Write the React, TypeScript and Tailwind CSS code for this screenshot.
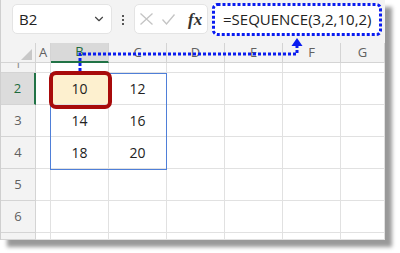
import { ChevronDown } from "lucide-react";

const colLetters = ["A", "B", "C", "D", "E", "F", "G"];

const data: Record<string, string> = {
    "2B": "10",
    "2C": "12",
    "3B": "14",
    "3C": "16",
    "4B": "18",
    "4C": "20",
};

const rows = [1, 2, 3, 4, 5, 6, 7];

function Toolbar() {
    return (
        <div className="flex h-[43px] items-start bg-[#f3f3f3] pl-[11px] pt-[4px]">
            {/* Name box */}
            <div className="flex h-[30px] w-[100px] items-center justify-between rounded-[5px] border border-[#e4e4e4] bg-white pl-[6px] pr-[5px]">
                <span className="text-[15px] text-[#222]">B2</span>
                <ChevronDown className="h-[14px] w-[14px] text-[#444]" strokeWidth={2} />
            </div>

            {/* Splitter dots */}
            <div className="ml-[10px] mt-[11px] flex flex-col gap-[2px]">
                <span className="h-[2px] w-[2px] bg-[#555]" />
                <span className="h-[2px] w-[2px] bg-[#555]" />
                <span className="h-[2px] w-[2px] bg-[#555]" />
            </div>

            {/* Cancel / enter / fx */}
            <div className="ml-[10px] flex h-[30px] w-[74px] items-center rounded-[5px] border border-[#e4e4e4] bg-white pl-[5px]">
                <svg width="13" height="12" viewBox="0 0 13 12" fill="none" stroke="#c4c4c4" strokeWidth="1.3">
                    <path d="M0.5 0.5 L12.5 11.5 M12.5 0.5 L0.5 11.5" />
                </svg>
                <svg className="ml-[9px]" width="13" height="11" viewBox="0 0 13 11" fill="none" stroke="#c4c4c4" strokeWidth="1.3">
                    <path d="M0.5 5.5 L4.5 10 L12.5 0.5" />
                </svg>
                <span className="ml-[13px] font-['Liberation_Serif',serif] text-[17px] font-bold italic leading-none text-[#333]">
                    fx
                </span>
            </div>

            {/* Formula input */}
            <div className="ml-[4px] flex h-[31px] w-[168px] items-center bg-white pl-[11px]">
                <span className="text-[15px] text-[#222]">=SEQUENCE(3,2,10,2)</span>
            </div>
        </div>
    );
}

function Grid() {
    return (
        <div className="grid h-[197px] grid-cols-[35px_15px_58px_58px_58px_58px_58px_1fr] grid-rows-[20px_10px_32px_32px_32px_32px_32px_1fr] overflow-hidden">
            {/* corner */}
            <div className="relative border-b border-r border-[#d4d4d4] bg-[#f3f3f3]">
                <div
                    className="absolute bottom-[2px] right-[3px] h-0 w-0"
                    style={{ borderBottom: "11px solid #c8c8c8", borderLeft: "11px solid transparent" }}
                />
            </div>
            {colLetters.map((c) =>
                c === "B" ? (
                    <div key={c} className="flex items-center justify-center border-b-2 border-r border-b-[#217346] border-r-[#d4d4d4] bg-[#d9d9d9] text-[13px] text-[#1e6b3c]">
                        {c}
                    </div>
                ) : (
                    <div key={c} className="flex items-center justify-center border-b border-r border-[#d4d4d4] bg-[#f3f3f3] text-[13px] text-[#616161]">
                        {c}
                    </div>
                )
            )}

            {rows.map((r) => (
                <RowCells key={r} r={r} />
            ))}
        </div>
    );
}

function RowCells({ r }: { r: number }) {
    const active = r === 2;
    let label: React.ReactNode = r;
    if (r === 1) label = <span className="-mt-[6px]">1</span>;
    if (r === 7) label = null;
    return (
        <>
            <div
                className={
                    active
                        ? "flex items-end justify-center overflow-hidden border-b border-r-2 border-b-[#d4d4d4] border-r-[#217346] bg-[#dcdcdc] pb-[6px] text-[13px] text-[#1e6b3c]"
                        : r === 1
                        ? "flex items-start justify-center overflow-hidden border-b border-r border-[#d4d4d4] bg-[#f3f3f3] text-[13px] leading-none text-[#8a8a8a]"
                        : "flex items-end justify-center overflow-hidden border-b border-r border-[#d4d4d4] bg-[#f3f3f3] pb-[6px] text-[13px] text-[#616161]"
                }
            >
                {label}
            </div>
            {colLetters.map((c) => {
                const v = data[`${r}${c}`];
                return (
                    <div
                        key={c}
                        className={
                            r === 2 && c === "B"
                                ? "flex items-center justify-center border-b border-r border-[#e1e1e1] bg-[#fdf0cf] text-[14px] text-[#222]"
                                : "flex items-center justify-center border-b border-r border-[#e1e1e1] bg-white text-[14px] text-[#222]"
                        }
                    >
                        {v}
                    </div>
                );
            })}
        </>
    );
}

export default function App() {
    return (
        <div className="h-[253px] w-[400px] bg-white font-['Open_Sans',sans-serif]">
            <div className="relative h-[240px] w-[385px] border-l border-[#cfcfcf] bg-white shadow-[7px_7px_4px_rgba(0,0,0,0.4)]">
                <Toolbar />
                <Grid />

                {/* Selection range */}
                <div className="absolute left-[49px] top-[73px] h-[97px] w-[117px] border border-[#4f7fd8]" />

                {/* Active cell highlight */}
                <div className="absolute left-[48px] top-[71px] h-[38px] w-[63px] rounded-[7px] border-4 border-[#a80b0b]" />

                {/* Annotation: dotted box + arrow */}
                <svg className="pointer-events-none absolute left-0 top-0" width="385" height="240" viewBox="0 0 385 240">
                    <rect x="212.5" y="4.5" width="167" height="30" rx="4" fill="none" stroke="#0a1cf0" strokeWidth="3" strokeDasharray="3 2" />
                    <path d="M79 71 V54 H296 V46" fill="none" stroke="#0a1cf0" strokeWidth="3" strokeDasharray="3 2" />
                    <polygon points="296,38 290.5,46 301.5,46" fill="#0a1cf0" />
                </svg>
            </div>
        </div>
    );
}
